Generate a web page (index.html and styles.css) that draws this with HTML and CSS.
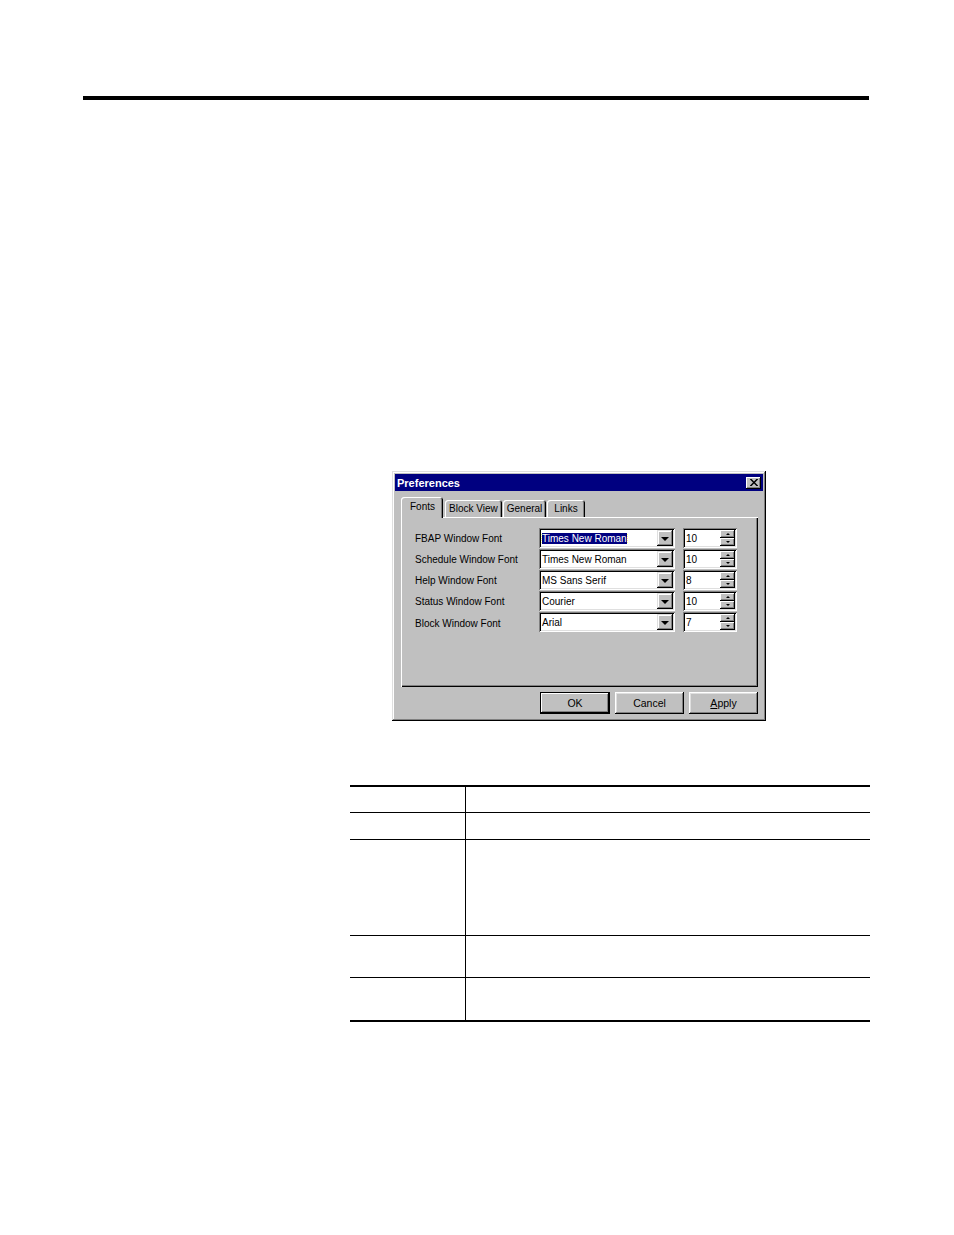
FILE: index.html
```html
<!DOCTYPE html>
<html>
<head>
<meta charset="utf-8">
<title>Preferences</title>
<link rel="stylesheet" href="styles.css">
</head>
<body>
<div class="rule"></div>

<div class="dialog">
  <div class="titlebar">
    <span class="title">Preferences</span>
    <span class="close"><svg width="8" height="7" viewBox="0 0 8 7"><path d="M0 0h1.6l2.4 2.6 2.4-2.6h1.6v.6L5 3.5 8 6.4v.6H6.4L4 4.4 1.6 7H0v-.6L3 3.5 0 .6z" fill="#000"/></svg></span>
  </div>
  <div class="tabs">
    <div class="tab active">Fonts</div>
    <div class="tab">Block View</div>
    <div class="tab">General</div>
    <div class="tab wide">Links</div>
  </div>
  <div class="panel">
    <div class="row">
      <span class="label">FBAP Window Font</span>
      <div class="combo"><span class="val"><span class="sel">Times New Roman</span></span><span class="drop"><span class="arrow"></span></span></div>
      <div class="spin"><span class="val">10</span><span class="spinbtns"><span class="sb"><span class="up"></span></span><span class="sb"><span class="dn"></span></span></span></div>
    </div>
    <div class="row">
      <span class="label">Schedule Window Font</span>
      <div class="combo"><span class="val">Times New Roman</span><span class="drop"><span class="arrow"></span></span></div>
      <div class="spin"><span class="val">10</span><span class="spinbtns"><span class="sb"><span class="up"></span></span><span class="sb"><span class="dn"></span></span></span></div>
    </div>
    <div class="row">
      <span class="label">Help Window Font</span>
      <div class="combo"><span class="val">MS Sans Serif</span><span class="drop"><span class="arrow"></span></span></div>
      <div class="spin"><span class="val">8</span><span class="spinbtns"><span class="sb"><span class="up"></span></span><span class="sb"><span class="dn"></span></span></span></div>
    </div>
    <div class="row">
      <span class="label">Status Window Font</span>
      <div class="combo"><span class="val">Courier</span><span class="drop"><span class="arrow"></span></span></div>
      <div class="spin"><span class="val">10</span><span class="spinbtns"><span class="sb"><span class="up"></span></span><span class="sb"><span class="dn"></span></span></span></div>
    </div>
    <div class="row">
      <span class="label low">Block Window Font</span>
      <div class="combo"><span class="val">Arial</span><span class="drop"><span class="arrow"></span></span></div>
      <div class="spin"><span class="val">7</span><span class="spinbtns"><span class="sb"><span class="up"></span></span><span class="sb"><span class="dn"></span></span></span></div>
    </div>
  </div>
  <div class="buttons">
    <div class="btn default">OK</div>
    <div class="btn">Cancel</div>
    <div class="btn"><span class="u">A</span>pply</div>
  </div>
</div>

<div class="grid">
  <div class="grow r1"><div class="c1"></div><div class="c2"></div></div>
  <div class="grow r2"><div class="c1"></div><div class="c2"></div></div>
  <div class="grow r3"><div class="c1"></div><div class="c2"></div></div>
  <div class="grow r4"><div class="c1"></div><div class="c2"></div></div>
  <div class="grow r5 last"><div class="c1"></div><div class="c2"></div></div>
</div>
</body>
</html>
```

FILE: styles.css
```css
html, body {
  margin: 0;
  padding: 0;
  background: #fff;
}
body {
  font-family: "Liberation Sans", Arial, sans-serif;
  width: 954px;
  height: 1235px;
  overflow: hidden;
}
.rule {
  margin: 96px 0 0 83px;
  width: 786px;
  height: 4px;
  background: #000;
}

/* dialog */
.dialog {
  margin: 371px 0 0 392px;
  width: 374px;
  height: 250px;
  box-sizing: border-box;
  padding: 3px;
  background: #c0c0c0;
  box-shadow: inset -1px -1px #000, inset 1px 1px #dfdfdf, inset -2px -2px #808080, inset 2px 2px #fff;
  font-size: 10px;
  color: #000;
}
.titlebar {
  height: 17px;
  background: #000080;
  display: flex;
  align-items: center;
  justify-content: space-between;
  padding: 0 2px 0 2px;
}
.title {
  color: #fff;
  font-weight: bold;
  font-size: 11px;
}
.close {
  width: 15px;
  height: 12px;
  background: #c0c0c0;
  box-shadow: inset -1px -1px #000, inset 1px 1px #fff, inset -2px -2px #808080;
  display: flex;
  align-items: center;
  justify-content: center;
}
.tabs {
  margin: 6px 0 0 6px;
  display: flex;
  align-items: flex-end;
  height: 20px;
}
.tab {
  height: 17px;
  padding: 0 4px;
  box-sizing: border-box;
  display: flex;
  align-items: center;
  background: #c0c0c0;
  border-radius: 3px 3px 0 0;
  box-shadow: inset 1px 1px #fff, inset -1px 0 #000, inset -2px 0 #808080;
  margin-right: 1px;
}
.tab.wide { padding: 0 7px; }
.tab.active {
  height: 21px;
  padding: 0 8px 3px 9px;
  margin-bottom: -1px;
  margin-right: 2px;
  position: relative;
  z-index: 1;
}
.panel {
  margin: 0 5px 0 6px;
  height: 170px;
  box-sizing: border-box;
  padding: 11px 0 0 14px;
  box-shadow: inset 1px 1px #fff, inset -1px -1px #000, inset -2px -2px #808080;
}
.row {
  display: flex;
  align-items: center;
  height: 20px;
  margin-bottom: 1px;
}
.label {
  width: 124px;
}
.label.low {
  padding-top: 3px;
}
.combo {
  width: 136px;
  height: 20px;
  box-sizing: border-box;
  background: #fff;
  box-shadow: inset 1px 1px #808080, inset -1px -1px #fff, inset 2px 2px #000, inset -2px -2px #dfdfdf;
  display: flex;
  align-items: center;
  padding: 2px;
}
.val {
  flex: 1;
  padding-left: 1px;
  white-space: nowrap;
  overflow: hidden;
}
.sel {
  background: #000080;
  color: #fff;
  outline: 1px dotted #ffff80;
}
.drop {
  width: 16px;
  height: 16px;
  background: #c0c0c0;
  box-shadow: inset -1px -1px #000, inset 1px 1px #dfdfdf, inset -2px -2px #808080, inset 2px 2px #fff;
  display: flex;
  align-items: center;
  justify-content: center;
}
.arrow {
  width: 0;
  height: 0;
  border-left: 4px solid transparent;
  border-right: 4px solid transparent;
  border-top: 4px solid #000;
  margin-top: 1px;
}
.spin {
  margin-left: 8px;
  width: 54px;
  height: 20px;
  box-sizing: border-box;
  background: #fff;
  box-shadow: inset 1px 1px #808080, inset -1px -1px #fff, inset 2px 2px #000, inset -2px -2px #dfdfdf;
  display: flex;
  align-items: center;
  padding: 2px;
}
.spinbtns {
  width: 15px;
  height: 16px;
  display: flex;
  flex-direction: column;
}
.sb {
  height: 8px;
  background: #c0c0c0;
  box-shadow: inset -1px -1px #000, inset 1px 1px #fff, inset -2px -2px #808080;
  display: flex;
  align-items: center;
  justify-content: center;
}
.up {
  width: 0;
  height: 0;
  border-left: 2px solid transparent;
  border-right: 2px solid transparent;
  border-bottom: 2px solid #000;
}
.dn {
  width: 0;
  height: 0;
  border-left: 2px solid transparent;
  border-right: 2px solid transparent;
  border-top: 2px solid #000;
}
.buttons {
  margin: 5px 5px 0 0;
  display: flex;
  justify-content: flex-end;
  gap: 5px;
}
.btn {
  width: 69px;
  height: 22px;
  box-sizing: border-box;
  display: flex;
  align-items: center;
  justify-content: center;
  background: #c0c0c0;
  box-shadow: inset -1px -1px #000, inset 1px 1px #fff, inset -2px -2px #808080, inset 2px 2px #dfdfdf;
  font-size: 10.5px;
}
.btn.default {
  width: 70px;
  box-shadow: inset 0 0 0 1px #000, inset -2px -2px #000, inset 2px 2px #fff, inset -3px -3px #808080;
}
.u { text-decoration: underline; }

/* table */
.grid {
  margin: 64px 0 0 350px;
  width: 520px;
  border-top: 2px solid #000;
  border-bottom: 2px solid #000;
}
.grow {
  display: flex;
  border-bottom: 1px solid #000;
}
.grow.last { border-bottom: none; }
.r1 { height: 25px; }
.r2 { height: 26px; }
.r3 { height: 95px; }
.r4 { height: 41px; }
.r5 { height: 42px; }
.c1 {
  width: 115px;
  border-right: 1px solid #000;
}
.c2 { flex: 1; }
```
